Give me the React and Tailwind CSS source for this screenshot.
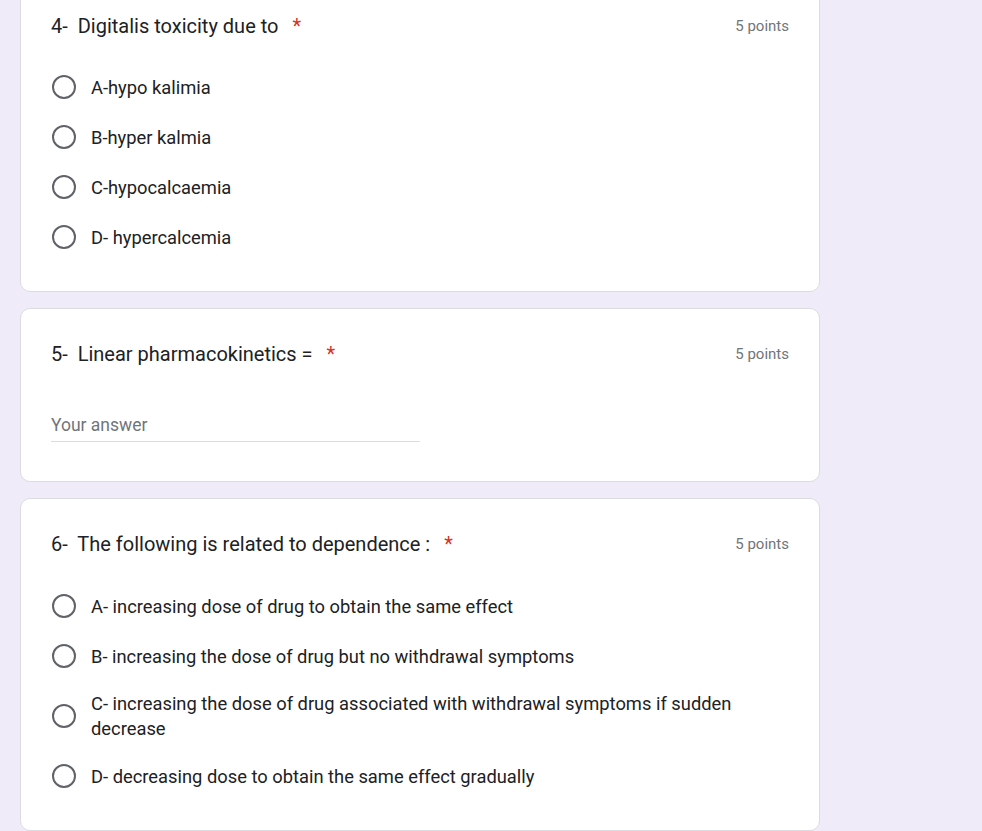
const font = { fontFamily: 'Roboto, "Liberation Sans", Arial, sans-serif' }

function Radio() {
  return (
    <div className="w-[25px] h-[30px] flex items-center justify-center shrink-0 mr-[15px]">
      <div className="w-[24px] h-[24px] rounded-full border-[2.5px] border-[#5f6368]" />
    </div>
  )
}

function Title({ text }) {
  return (
    <div className="flex items-center justify-between">
      <div className="text-[20px] leading-[30px] text-[#202124]">
        <span className="whitespace-pre">{text}</span>
        <span className="text-[#d93025] ml-[14px]">*</span>
      </div>
      <div className="text-[15px] text-[#70757a]">5 points</div>
    </div>
  )
}

function Card({ title, children }) {
  return (
    <div className="bg-white border border-[#dadce0] rounded-[10px] px-[30px] pt-[30px] pb-[29px]">
      <Title text={title} />
      {children}
    </div>
  )
}

function Options({ items, top }) {
  return (
    <div className={top}>
      {items.map((o) => (
        <div key={o} className="flex items-center py-[10px]">
          <Radio />
          <div className="text-[18.33px] leading-[25px] text-[#202124]">{o}</div>
        </div>
      ))}
    </div>
  )
}

export default function App() {
  return (
    <div className="min-h-screen bg-[#f0ebf8] overflow-hidden" style={font}>
      <div className="w-[800px] ml-[20px] -mt-[20px] flex flex-col gap-[16px]">
        <Card title={'4-  Digitalis toxicity due to'}>
          <Options
            top="mt-[21px]"
            items={['A-hypo kalimia', 'B-hyper kalmia', 'C-hypocalcaemia', 'D- hypercalcemia']}
          />
        </Card>

        <Card title={'5-  Linear pharmacokinetics ='}>
          <div className="mt-[41px] mb-[10px] w-1/2 h-[32px] border-b border-[#dadce0] flex items-center text-[17.5px] text-[#70757a]">
            Your answer
          </div>
        </Card>

        <Card title={'6-  The following is related to dependence :'}>
          <Options
            top="mt-[22px]"
            items={[
              'A- increasing dose of drug to obtain the same effect',
              'B- increasing the dose of drug but no withdrawal symptoms',
              'C- increasing the dose of drug associated with withdrawal symptoms if sudden decrease',
              'D- decreasing dose to obtain the same effect gradually',
            ]}
          />
        </Card>
      </div>
    </div>
  )
}
